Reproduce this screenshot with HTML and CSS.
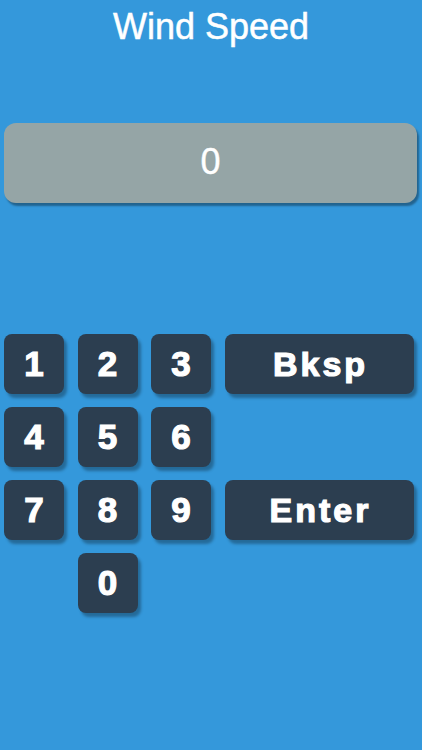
FILE: index.html
```html
<!DOCTYPE html>
<html lang="en">
<head>
    <meta charset="UTF-8">
    <title>Wind Speed</title>
    <link rel="stylesheet" href="styles.css">
</head>
<body>
    <h1 class="title">Wind Speed</h1>
    <div class="display" id="display">0</div>
    <div class="keypad">
        <button class="key">1</button>
        <button class="key">2</button>
        <button class="key">3</button>
        <button class="key wide">Bksp</button>
        <button class="key">4</button>
        <button class="key">5</button>
        <button class="key">6</button>
        <span class="spacer"></span>
        <button class="key">7</button>
        <button class="key">8</button>
        <button class="key">9</button>
        <button class="key wide">Enter</button>
        <button class="key zero">0</button>
    </div>
</body>
</html>
```

FILE: styles.css
```css
html, body {
    margin: 0; padding: 0; height: 100%;
    background: #3498db;
    font-family: 'Liberation Sans', Arial, sans-serif;
}
.title {
    margin: 0; padding-top: 6px;
    font-size: 36px; font-weight: normal; line-height: 1.15;
    color: #fff; text-align: center;
    -webkit-text-stroke: 0.5px #fff;
}
.display {
    margin: 76px 5px 0 4px;
    height: 80px; line-height: 78px;
    background: #95a5a6;
    border-radius: 12px;
    box-shadow: 2px 3px 2px rgba(0,0,0,0.35);
    color: #fff; font-size: 36px; text-align: center;
    -webkit-text-stroke: 0.4px #fff;
}
.keypad {
    display: grid;
    grid-template-columns: 60px 60px 60px 189px;
    grid-auto-rows: 60px;
    column-gap: 13.5px; row-gap: 13px;
    margin: 131px 0 0 4px;
}
.key {
    border: 0; padding: 0;
    background: #2c3e50;
    border-radius: 8px;
    box-shadow: 3px 4px 3px rgba(0,0,0,0.3);
    color: #fff;
    font-family: 'Liberation Sans', Arial, sans-serif;
    font-size: 35px; font-weight: bold;
    -webkit-text-stroke: 1.2px #fff;
    cursor: pointer;
}
.key.wide { font-size: 34px; letter-spacing: 3px; text-indent: 3px; }
.zero { grid-column: 2; }
```
